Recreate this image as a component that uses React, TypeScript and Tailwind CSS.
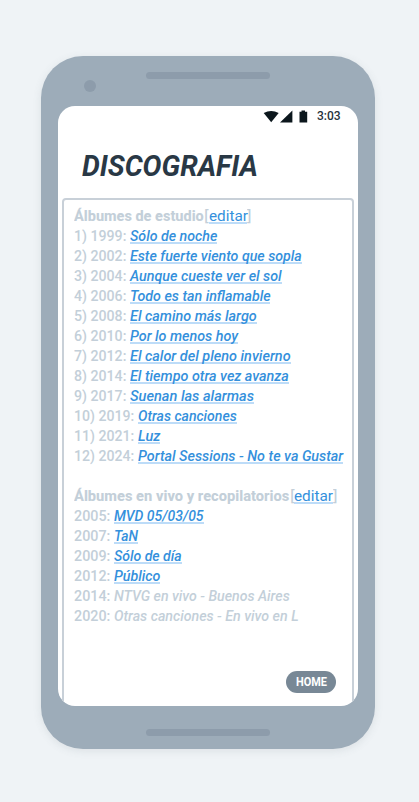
import { useLayoutEffect, useRef, useState } from "react";

type FitProps = { text: string; width: number; className?: string };

// Condenses the text so that its line takes exactly the given width.
function Fit({ text, width, className = "" }: FitProps) {
  const ref = useRef<HTMLSpanElement>(null);
  const [scale, setScale] = useState(1);
  useLayoutEffect(() => {
    if (ref.current) setScale(width / ref.current.offsetWidth);
  }, [text, width]);
  return (
    <span className={`shrink-0 whitespace-pre ${className}`} style={{ width }}>
      <span ref={ref} className="inline-block origin-left" style={{ transform: `scaleX(${scale})` }}>
        {text}
      </span>
    </span>
  );
}

const link = "h-[18px] border-b-2 border-[#bddcf8] text-[#3490dc]";

type Album = { label: string; title: string; width: number; plain?: boolean };

const studio: Album[] = [
  { label: "1) 1999:", title: "Sólo de noche", width: 87 },
  { label: "2) 2002:", title: "Este fuerte viento que sopla", width: 172 },
  { label: "3) 2004:", title: "Aunque cueste ver el sol", width: 152 },
  { label: "4) 2006:", title: "Todo es tan inflamable", width: 140.5 },
  { label: "5) 2008:", title: "El camino más largo", width: 127 },
  { label: "6) 2010:", title: "Por lo menos hoy", width: 108 },
  { label: "7) 2012:", title: "El calor del pleno invierno", width: 161 },
  { label: "8) 2014:", title: "El tiempo otra vez avanza", width: 159 },
  { label: "9) 2017:", title: "Suenan las alarmas", width: 124 },
  { label: "10) 2019:", title: "Otras canciones", width: 99 },
  { label: "11) 2021:", title: "Luz", width: 22.5 },
  { label: "12) 2024:", title: "Portal Sessions - No te va Gustar", width: 205 },
];

const live: Album[] = [
  { label: "2005:", title: "MVD 05/03/05", width: 90 },
  { label: "2007:", title: "TaN", width: 24 },
  { label: "2009:", title: "Sólo de día", width: 68 },
  { label: "2012:", title: "Público", width: 46 },
  { label: "2014:", title: "NTVG en vivo - Buenos Aires", width: 176, plain: true },
  { label: "2020:", title: "Otras canciones - En vivo en L", width: 185, plain: true },
];

function Heading({ text, width }: { text: string; width: number }) {
  return (
    <div className="flex h-5">
      <Fit text={text} width={width} className="font-extrabold" />
      <Fit text="[" width={4.5} />
      <Fit text="editar" width={38.5} className={link} />
      <Fit text="]" width={4.5} />
    </div>
  );
}

function Row({ album }: { album: Album }) {
  const labelWidth = album.label.length === 8 ? 55.5 : album.label.length === 9 ? 63.5 : 39.5;
  return (
    <div className="flex h-5">
      <Fit text={album.label} width={labelWidth - 3.5} className="mr-[3.5px] font-medium" />
      <Fit text={album.title} width={album.width} className={`font-medium italic ${album.plain ? "" : link}`} />
    </div>
  );
}

export default function App() {
  return (
    <div className="flex h-[802px] w-[419px] flex-col overflow-hidden bg-[#eff3f6] pt-[55.5px] pl-[41px] font-['Roboto',sans-serif]">
      <div className="flex h-[693.5px] w-[334px] flex-col rounded-[42px] bg-[#9dacb9] pt-[0.5px] pl-[17px] shadow-[0_2px_8px_rgba(80,95,110,0.12)]">
        <div className="flex h-[50px] shrink-0 items-start">
          <div className="mt-6 ml-[25.5px] size-3 rounded-full bg-[#8d9cab]" />
          <div className="mt-4 ml-[50.5px] h-[7px] w-[124px] rounded-full bg-[#8d9cab]" />
        </div>
        <div className="flex h-[600px] w-[300px] shrink-0 flex-col overflow-hidden rounded-[17px] bg-white">
          <div className="flex h-5 items-center pl-[205px]">
            <svg width="46" height="13" viewBox="0 0 46 13" fill="#0c171d">
              <path d="M0.7 3Q8.2-1 15.7 3L8.2 12.3Z" />
              <path d="M17 12.5 29.4 0.5V12.5Z" />
              <path d="M36.5 1.7H38.5V0.5H42V1.7H44.2V12.5H36.5Z" />
            </svg>
            <Fit text="3:03" width={24} className="ml-2 text-xs leading-5 font-medium text-[#26323b]" />
          </div>
          <h1 className="mt-[22px] ml-[23.5px] h-9 text-[30px] leading-9 font-bold text-[#293845] italic">
            <Fit text="DISCOGRAFIA" width={176} />
          </h1>
          <div className="mt-[14px] ml-1 flex h-[520px] w-[292px] shrink-0 flex-col rounded-[4px] border-2 border-[#c8d0d8] pt-[6px] pl-[10px] text-[15.5px] leading-5 text-[#c3cfd9]">
            <Heading text="Álbumes de estudio" width={130} />
            {studio.map((album) => (
              <Row key={album.label} album={album} />
            ))}
            <div className="h-5" />
            <Heading text="Álbumes en vivo y recopilatorios" width={215.5} />
            {live.map((album) => (
              <Row key={album.label} album={album} />
            ))}
            <button className="mt-[45px] mr-[16px] flex h-[22px] w-[50px] shrink-0 items-center justify-center self-end rounded-full bg-[#788896] text-xs leading-4 font-bold text-white">
              <Fit text="HOME" width={31} />
            </button>
          </div>
        </div>
        <div className="mt-[23px] ml-[88px] h-[7px] w-[124px] shrink-0 rounded-full bg-[#8d9cab]" />
      </div>
    </div>
  );
}
